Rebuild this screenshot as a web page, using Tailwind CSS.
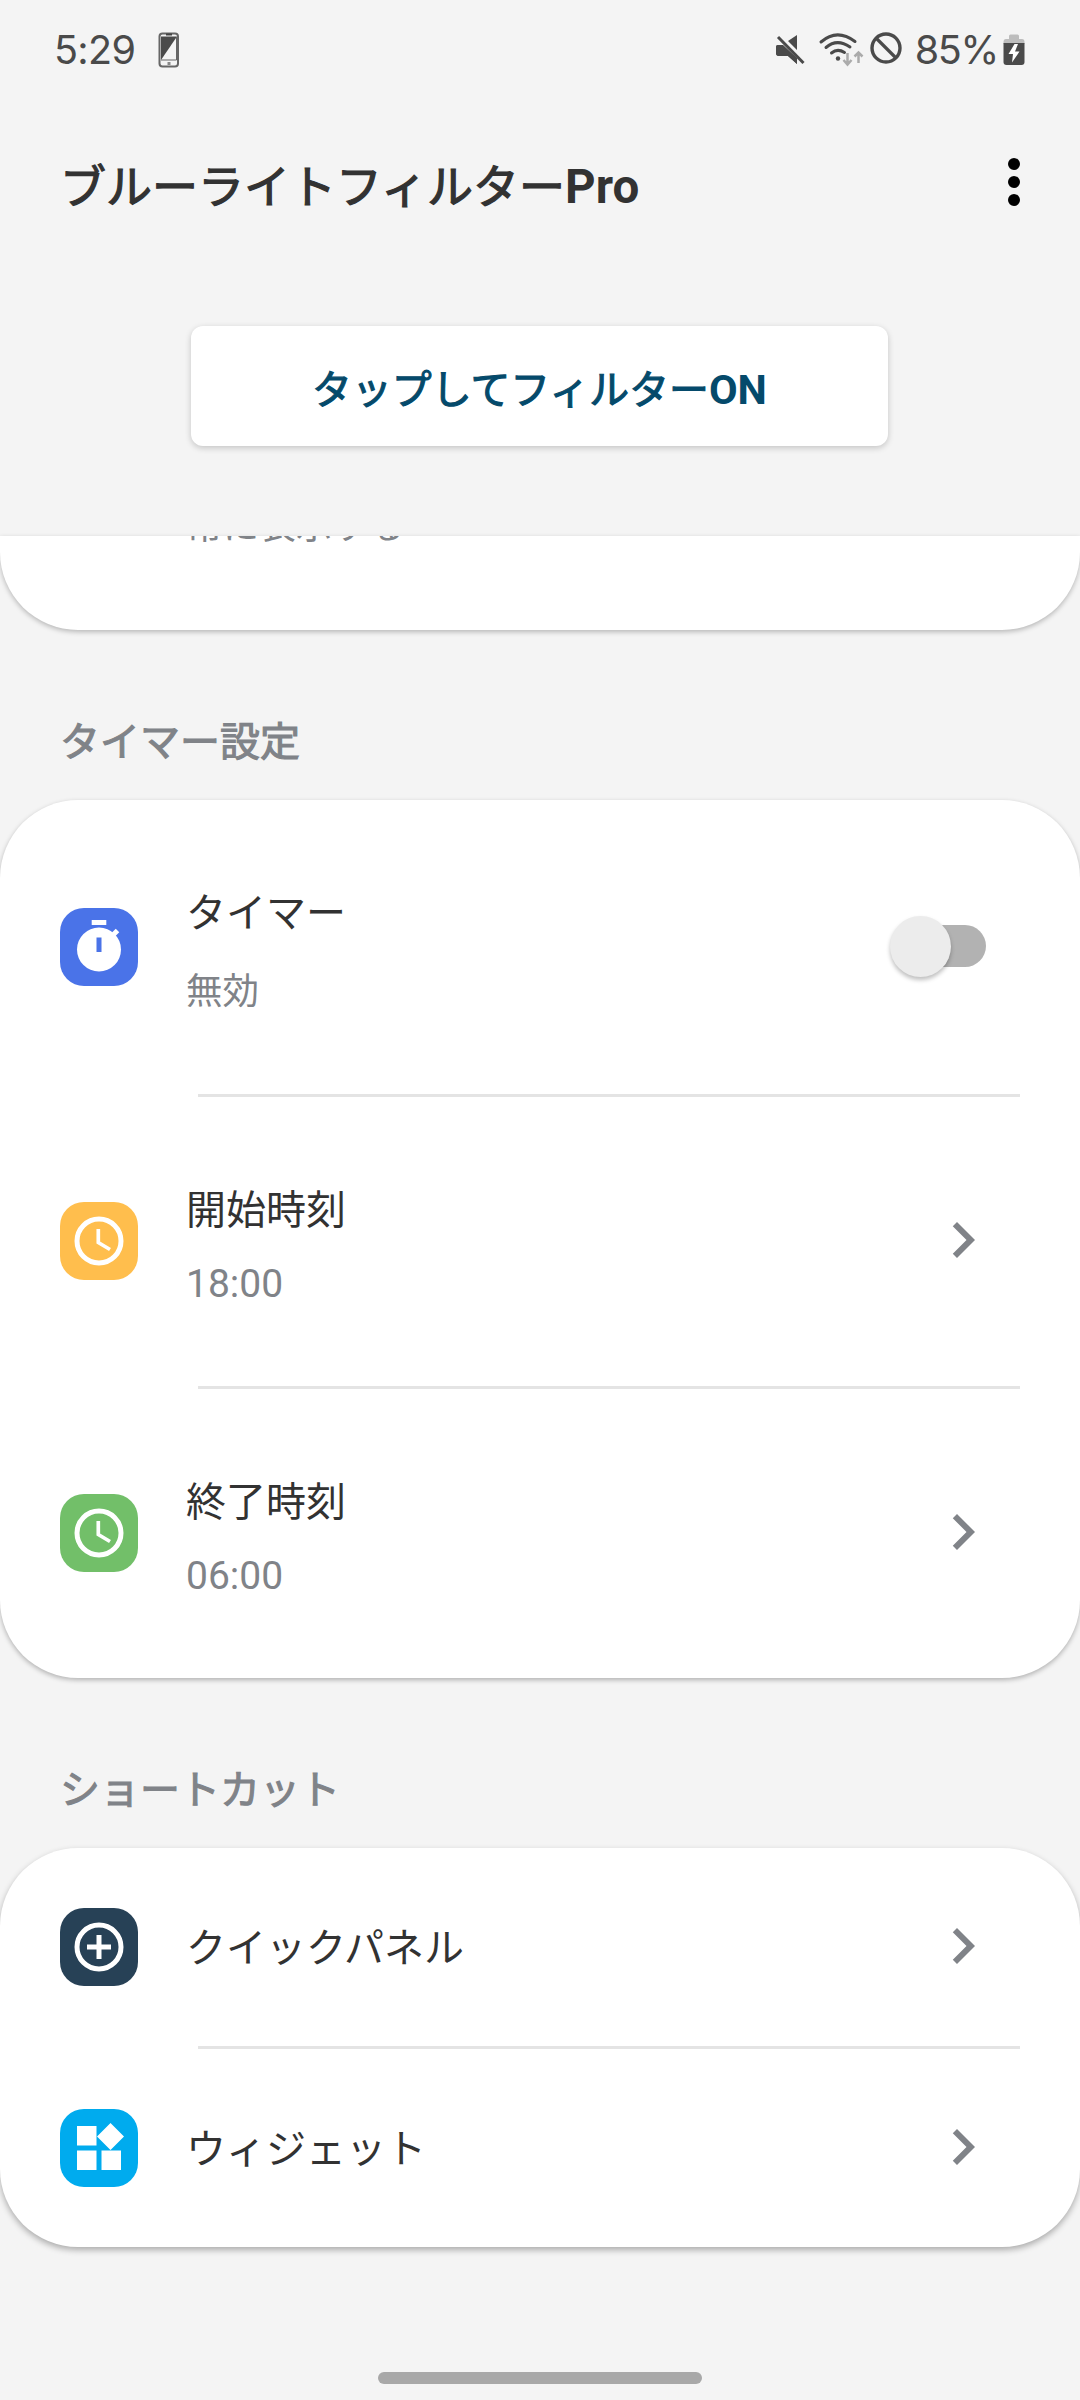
<!DOCTYPE html>
<html lang="ja">
<head>
<meta charset="utf-8">
<title>ブルーライトフィルターPro</title>
<script src="https://cdn.jsdelivr.net/npm/@tailwindcss/browser@4"></script>
</head>
<body class="bg-[#f4f4f4]">
<div class="flex h-[2400px] w-[1080px] flex-col overflow-hidden bg-[#f4f4f4] font-['Noto_Sans_CJK_JP',sans-serif] text-[40px] text-[#323232]">

  <header class="h-[536px] shrink-0">
    <div class="flex h-[100px] items-center justify-between pr-[55px] pl-[54px] font-['Inter',sans-serif] text-[39.500px] leading-[100px] tracking-[-0.700px] text-[#4a4a4a]">
      <div class="flex items-center gap-[23px]">
        <span>5:29</span>
        <svg class="h-[36px] w-[22px]" viewBox="0 0 22 36">
          <rect x="1.5" y="1.5" width="18.500" height="33" rx="3" fill="none" stroke="#666" stroke-width="2"/>
          <path d="M3 4.500H19L3 28Z" fill="#4a4a4a"/>
          <path d="M3 28H18.500V5" fill="none" stroke="#666" stroke-width="1"/>
          <path d="M8 2.500h6" stroke="#444" stroke-width="2"/>
          <rect x="9.500" y="30" width="3" height="3" fill="#888"/>
        </svg>
      </div>
      <div class="flex items-center">
        <svg class="h-[60px] w-[146px]" viewBox="0 0 146 60">
          <path d="M1 27q0-2 2-2h5L22 38v6L13 36H4q-3 0-3-3ZM22 15v15L13 21Z" fill="#4a4a4a"/>
          <path d="M3.500 17.500L29 43" stroke="#f4f4f4" stroke-width="5"/>
          <path d="M1 27q0-2 2-2h5L22 38v6L13 36H4q-3 0-3-3Z" fill="#4a4a4a"/>
          <path d="M3 17L28.500 43" stroke="#4a4a4a" stroke-width="3"/>
          <g fill="none" stroke="#4a4a4a" stroke-width="3" stroke-linecap="round">
            <path d="M46 22Q62 8 80 21.500"/><path d="M51 27.500Q62 18 75 27"/><path d="M56.500 33Q62.500 28 69.500 32.500"/>
          </g>
          <circle cx="63" cy="38.500" r="2.200" fill="#4a4a4a"/>
          <path d="M72.500 33V44M68.500 40L72.500 44.500L76.500 40M83.500 43V32.500M79.500 36.500L83.500 32.500L87.500 36.500" fill="none" stroke="#ababab" stroke-width="2.500"/>
          <circle cx="111" cy="28" r="14" fill="none" stroke="#4a4a4a" stroke-width="3.400"/>
          <path d="M101 18L121 38" stroke="#4a4a4a" stroke-width="3.200"/>
        </svg>
        <span class="mr-[5px] ml-[-6px] tracking-[-1.300px]">85%</span>
        <svg class="h-[32px] w-[22px]" viewBox="0 0 22 32">
          <path d="M6 5V2q0-1.500 1.500-1.500h7Q16 .500 16 2V5h3q2.500 0 2.500 3v2H.500V8q0-3 2.500-3Z" fill="#bdbdbd"/>
          <path d="M.500 9h21V28q0 3-3 3h-15q-3 0-3-3Z" fill="#4a4a4a"/>
          <path d="M11.500 10L5.500 20h4.500L9 28.500L16.500 17.500H12L15 10Z" fill="#fff"/>
        </svg>
      </div>
    </div>

    <div class="flex h-[164px] items-center justify-between pl-[60px]">
      <h1 class="pt-[1px] text-[46px] leading-[60px] [-webkit-text-stroke:1.2px]">ブルーライトフィルター<span class="font-['Roboto'] text-[47.500px] leading-none font-bold [-webkit-text-stroke:0]">Pro</span></h1>
      <svg class="mr-[30px] h-[72px] w-[72px]" viewBox="0 0 24 24" fill="#000"><circle cx="12" cy="6" r="2"/><circle cx="12" cy="12" r="2"/><circle cx="12" cy="18" r="2"/></svg>
    </div>

    <button class="mt-[62px] ml-[191px] block h-[120px] w-[697px] rounded-[12px] bg-white pt-[1px] text-[39.900px] leading-[60px] text-[#054a6b] shadow-[0_2px_6px_rgba(0,0,0,0.2)] [-webkit-text-stroke:1.1px]">タップしてフィルター<span class="font-['Roboto'] text-[41.500px] leading-none font-bold [-webkit-text-stroke:0]">ON</span></button>
  </header>

  <section class="h-[94px] shrink-0 overflow-hidden rounded-b-[78px] bg-white shadow-[0_2px_5px_rgba(0,0,0,0.25)]">
    <p class="mt-[-38px] ml-[186px] text-[36.600px] leading-[52px] text-[#808388]">常に表示する</p>
  </section>

  <h2 class="mt-[79px] ml-[60px] h-[91px] shrink-0 leading-[60px] text-[#808388] [-webkit-text-stroke:1.1px]">タイマー設定</h2>

  <section class="shrink-0 rounded-[78px] bg-white shadow-[0_2px_5px_rgba(0,0,0,0.28)]">
    <div class="flex h-[294px] items-start pl-[60px]">
      <svg class="mt-[108px] h-[78px] w-[78px] rounded-[24px] bg-[#4a73e8]" viewBox="0 0 78 78">
        <circle cx="39" cy="41.500" r="22" fill="#fff"/>
        <rect x="31.700" y="12" width="14.600" height="5" fill="#fff"/>
        <path d="M52.500 27.500L57.500 22.500" stroke="#fff" stroke-width="5"/>
        <rect x="36.500" y="29.500" width="5" height="14.500" fill="#4a73e8"/>
      </svg>
      <div class="mt-[80px] ml-[48px] grow">
        <p class="leading-[60px]">タイマー</p>
        <p class="mt-[26px] text-[36.500px] leading-[46px] text-[#808388]">無効</p>
      </div>
      <div class="mt-[125px] mr-[94px] flex h-[42px] w-[84px] items-center rounded-full bg-[#b2b2b2]">
        <span class="ml-[-12px] size-[61px] shrink-0 rounded-full bg-[#ececec] shadow-[0_3px_4px_rgba(0,0,0,0.25)]"></span>
      </div>
    </div>
    <div class="mr-[60px] ml-[198px] h-[3px] bg-[#e4e4e4]"></div>
    <div class="flex h-[289px] items-start pl-[60px]">
      <svg class="mt-[105px] h-[78px] w-[78px] rounded-[24px] bg-[#ffbe4d]" viewBox="0 0 78 78" fill="none" stroke="#fff">
        <circle cx="39" cy="39" r="22" stroke-width="5"/>
        <path d="M38.300 27V40.500L50 47.500" stroke-width="3.700"/>
      </svg>
      <div class="mt-[80px] ml-[48px] grow">
        <p class="leading-[60px]">開始時刻</p>
        <p class="mt-[24px] font-['Roboto'] text-[39px] leading-[46px] text-[#808388]">18:00</p>
      </div>
      <svg class="mt-[107px] mr-[81px] size-[72px]" viewBox="0 0 24 24" fill="#808388"><path d="M10 6L8.590 7.410 13.170 12l-4.580 4.590L10 18l6-6z"/></svg>
    </div>
    <div class="mr-[60px] ml-[198px] h-[3px] bg-[#e4e4e4]"></div>
    <div class="flex h-[289px] items-start pl-[60px]">
      <svg class="mt-[105px] h-[78px] w-[78px] rounded-[24px] bg-[#72bf69]" viewBox="0 0 78 78" fill="none" stroke="#fff">
        <circle cx="39" cy="39" r="22" stroke-width="5"/>
        <path d="M38.300 27V40.500L50 47.500" stroke-width="3.700"/>
      </svg>
      <div class="mt-[80px] ml-[48px] grow">
        <p class="leading-[60px]">終了時刻</p>
        <p class="mt-[24px] font-['Roboto'] text-[39px] leading-[46px] text-[#808388]">06:00</p>
      </div>
      <svg class="mt-[107px] mr-[81px] size-[72px]" viewBox="0 0 24 24" fill="#808388"><path d="M10 6L8.590 7.410 13.170 12l-4.580 4.590L10 18l6-6z"/></svg>
    </div>
  </section>

  <h2 class="mt-[79px] ml-[60px] h-[91px] shrink-0 leading-[60px] text-[#808388] [-webkit-text-stroke:1.1px]">ショートカット</h2>

  <section class="shrink-0 rounded-[78px] bg-white shadow-[0_3px_6px_rgba(0,0,0,0.3)]">
    <div class="flex h-[198px] items-start pl-[60px]">
      <svg class="mt-[60px] h-[78px] w-[78px] rounded-[24px] bg-[#274156]" viewBox="0 0 78 78" fill="none" stroke="#fff" stroke-width="5">
        <circle cx="39" cy="39" r="22"/>
        <path d="M39 27V51M27 39H51"/>
      </svg>
      <p class="mt-[67px] ml-[48px] grow leading-[60px]">クイックパネル</p>
      <svg class="mt-[62px] mr-[81px] size-[72px]" viewBox="0 0 24 24" fill="#808388"><path d="M10 6L8.590 7.410 13.170 12l-4.580 4.590L10 18l6-6z"/></svg>
    </div>
    <div class="mr-[60px] ml-[198px] h-[3px] bg-[#e4e4e4]"></div>
    <div class="flex h-[198px] items-start pl-[60px]">
      <svg class="mt-[60px] h-[78px] w-[78px] rounded-[24px] bg-[#00abee]" viewBox="0 0 78 78" fill="#fff">
        <path d="M17 17H36.500V36.500H17ZM17 41.500H36.500V61H17ZM41.500 41.500H61V61H41.500ZM50.500 14L64 27.500L50.500 41L37 27.500Z"/>
      </svg>
      <p class="mt-[67px] ml-[48px] grow leading-[60px]">ウィジェット</p>
      <svg class="mt-[62px] mr-[81px] size-[72px]" viewBox="0 0 24 24" fill="#808388"><path d="M10 6L8.590 7.410 13.170 12l-4.580 4.590L10 18l6-6z"/></svg>
    </div>
  </section>

  <div class="mt-[125px] ml-[378px] h-[12px] w-[324px] shrink-0 rounded-full bg-[#a8a8a8]"></div>
</div>
</body>
</html>
